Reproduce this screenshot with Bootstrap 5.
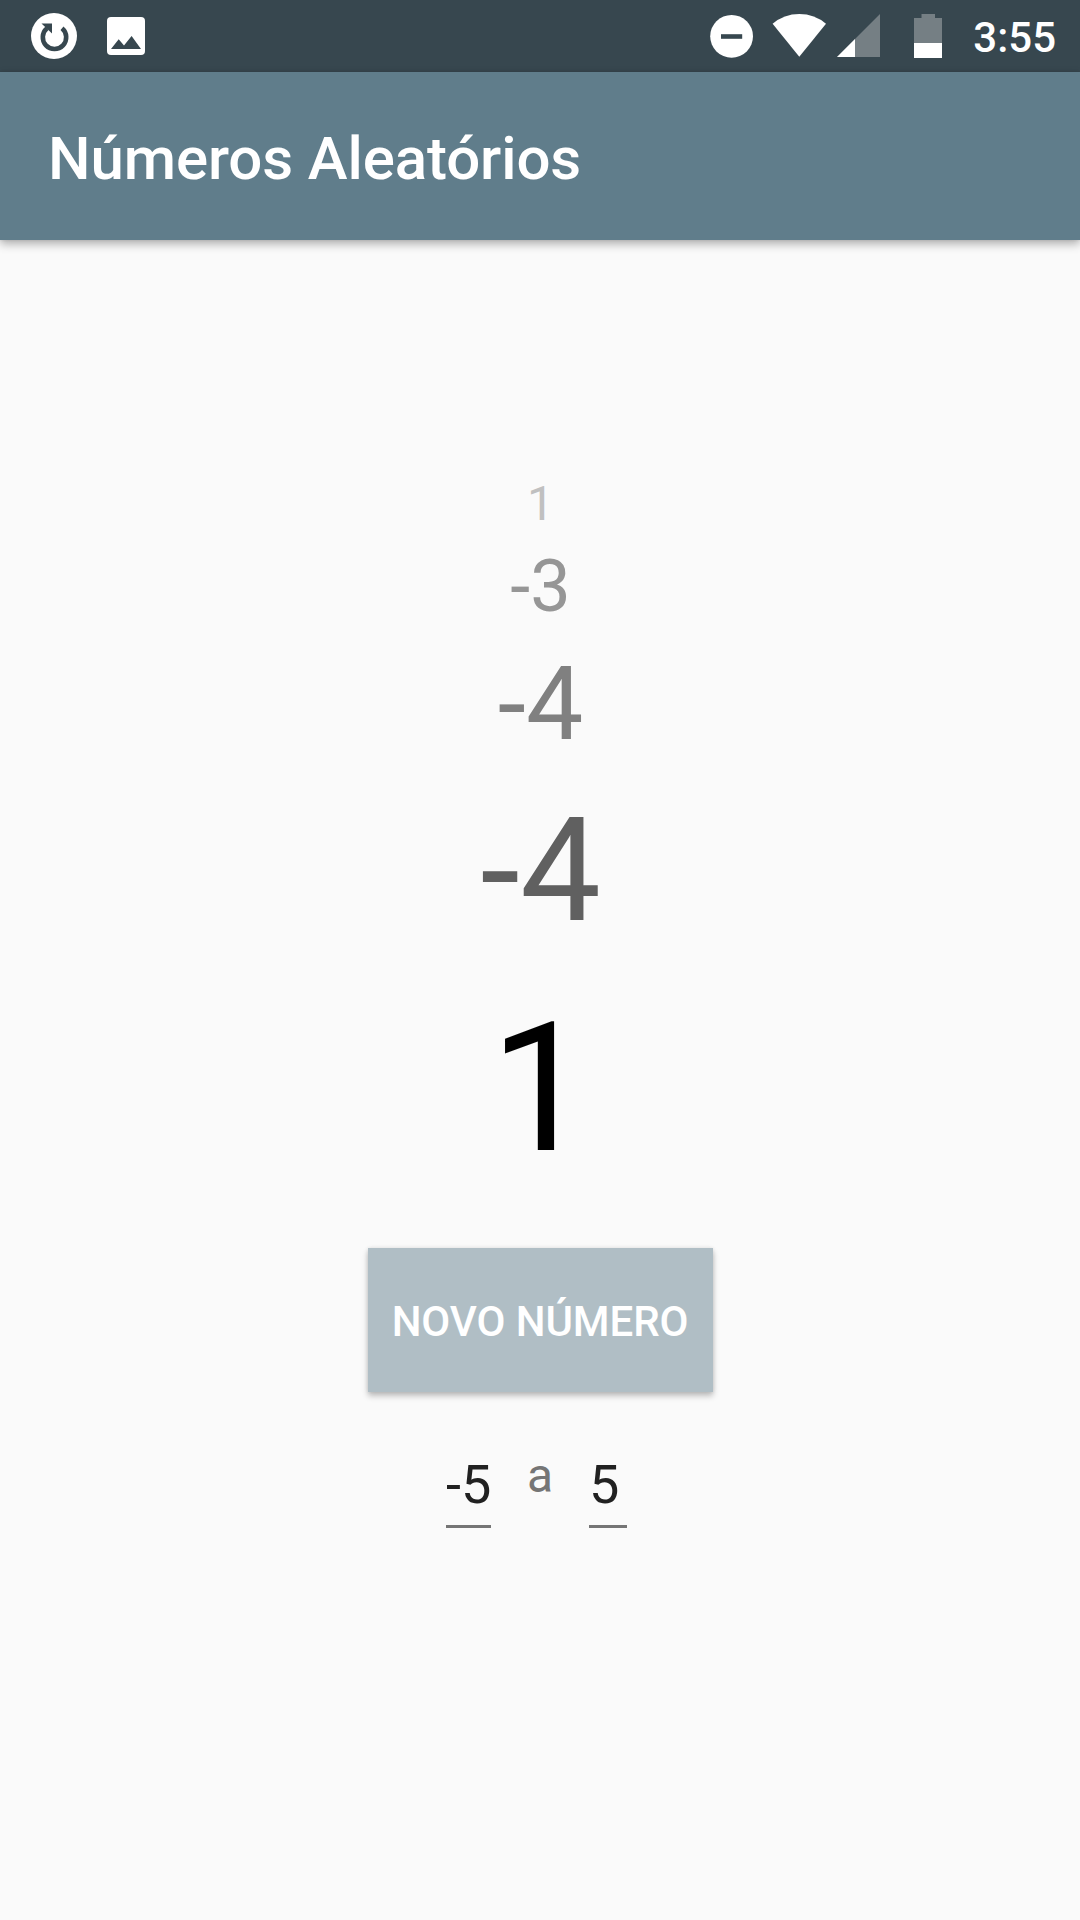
<!DOCTYPE html>
<html lang="pt-BR">
<head>
<meta charset="utf-8">
<meta name="viewport" content="width=device-width, initial-scale=1">
<title>Números Aleatórios</title>
<link href="https://cdn.jsdelivr.net/npm/bootstrap@5.3.0/dist/css/bootstrap.min.css" rel="stylesheet">
<style>
  body { font-family: Roboto, "Noto Sans", sans-serif; background: #fafafa; height: 1920px; }
  .status-bar { height: 72px; background: #37474f; padding: 0 24px 0 31px; }
  .status-bar svg { display: block; flex: none; }
  .ic-photo { margin-left: 30px; }
  .ic-wifi { margin-left: 19px; }
  .ic-signal { margin-left: 11px; }
  .ic-battery { margin-left: 34px; }
  .clock { font-size: 42px; font-weight: 500; line-height: 50px; margin-left: 31px; padding-top: 3px; }
  .app-bar { height: 168px; padding: 0 48px; background: #607d8b; box-shadow: 0 4px 9px rgba(0,0,0,.3), 0 0 3px rgba(0,0,0,.1); }
  .app-title { font-size: 60px; font-weight: 500; line-height: 72px; padding-top: 5px; letter-spacing: -.1px; }
  .history { padding: 230px 0 0 1px; }
  .num { line-height: 1.225; padding-top: .102em; }
  .n1 { font-size: 48px; color: #c0c0c0; margin-bottom: 1.5px; }
  .n2 { font-size: 72px; color: #969696; margin-bottom: .5px; }
  .n3 { font-size: 102px; color: #808080; margin-bottom: 1.5px; }
  .n4 { font-size: 144px; color: #606060; margin-bottom: 2px; }
  .n5 { font-size: 180px; color: #000; }
  .btn-new, .btn-new:hover { width: 345px; height: 144px; margin-top: 48px; background: #b0bec5; color: #fff; font-size: 42px; font-weight: 500; line-height: 50px; letter-spacing: -.08px; padding: 4px 0 0; border: 0; border-radius: 0; box-shadow: 0 4px 6px rgba(0,0,0,.24), 0 0 4px rgba(0,0,0,.1); }
  .range { margin-top: 48px; padding-left: 446px; }
  .field { width: 45px; height: 88px; padding: 5px 0 0; border: 0; border-bottom: 3px solid #757575; border-radius: 0; background: transparent; color: #212121; font-size: 54px; line-height: 63px; outline: 0; }
  .field-max { width: 38px; }
  .sep { width: 27px; margin: 8px 35px 0 36px; font-size: 48px; line-height: 56px; color: #757575; }
</style>
</head>
<body>
<header>
  <div class="status-bar d-flex align-items-center text-white">
    <svg width="46" height="72" viewBox="31 0 46 72"><circle cx="54" cy="36" r="23" fill="#fff"/><path d="M62 28.3A11.7 11.7 0 1 1 47 28.3" fill="none" stroke="#37474f" stroke-width="4.6"/><path d="M41.5 23.5H52V33.5Z" fill="#37474f"/></svg>
    <svg class="ic-photo" width="38" height="72" viewBox="107 0 38 72"><rect x="107" y="17" width="38" height="38" rx="4" fill="#fff"/><path d="M111 49L118.7 39.2L124 45.5L131.6 36L141 49Z" fill="#37474f"/></svg>
    <svg class="ms-auto" width="43" height="72" viewBox="710 0 43 72"><circle cx="731.6" cy="36.3" r="21.4" fill="#fff"/><path d="M721 34.2h21.2v4.6H721z" fill="#37474f"/></svg>
    <svg class="ic-wifi" width="54" height="72" viewBox="772 0 54 72"><path d="M799.3 56.8L772.6 23.8Q784 14 799.3 14T826 23.8Z" fill="#fff"/></svg>
    <svg class="ic-signal" width="43" height="72" viewBox="837 0 43 72"><path d="M880 14V57H837Z" fill="#757f84"/><path d="M855 39V57H837Z" fill="#fff"/></svg>
    <svg class="ic-battery" width="28" height="72" viewBox="914 0 28 72"><path d="M921.5 14h13.5v4h7v25h-28V18h7.500z" fill="#757f84"/><path d="M914 43h28v15h-28z" fill="#fff"/></svg>
    <div class="clock">3:55</div>
  </div>
  <div class="app-bar d-flex align-items-center">
    <h1 class="app-title text-white mb-0">Números Aleatórios</h1>
  </div>
</header>
<main class="d-flex flex-column">
  <div class="history text-center">
    <div class="num n1">1</div>
    <div class="num n2">-3</div>
    <div class="num n3">-4</div>
    <div class="num n4">-4</div>
    <div class="num n5">1</div>
  </div>
  <button type="button" class="btn btn-new align-self-center text-uppercase text-nowrap">Novo número</button>
  <div class="range d-flex align-items-start">
    <input class="field" type="text" value="-5" aria-label="Mínimo">
    <div class="sep">a</div>
    <input class="field field-max" type="text" value="5" aria-label="Máximo">
  </div>
</main>
<script src="https://cdn.jsdelivr.net/npm/bootstrap@5.3.0/dist/js/bootstrap.bundle.min.js"></script>
</body>
</html>
